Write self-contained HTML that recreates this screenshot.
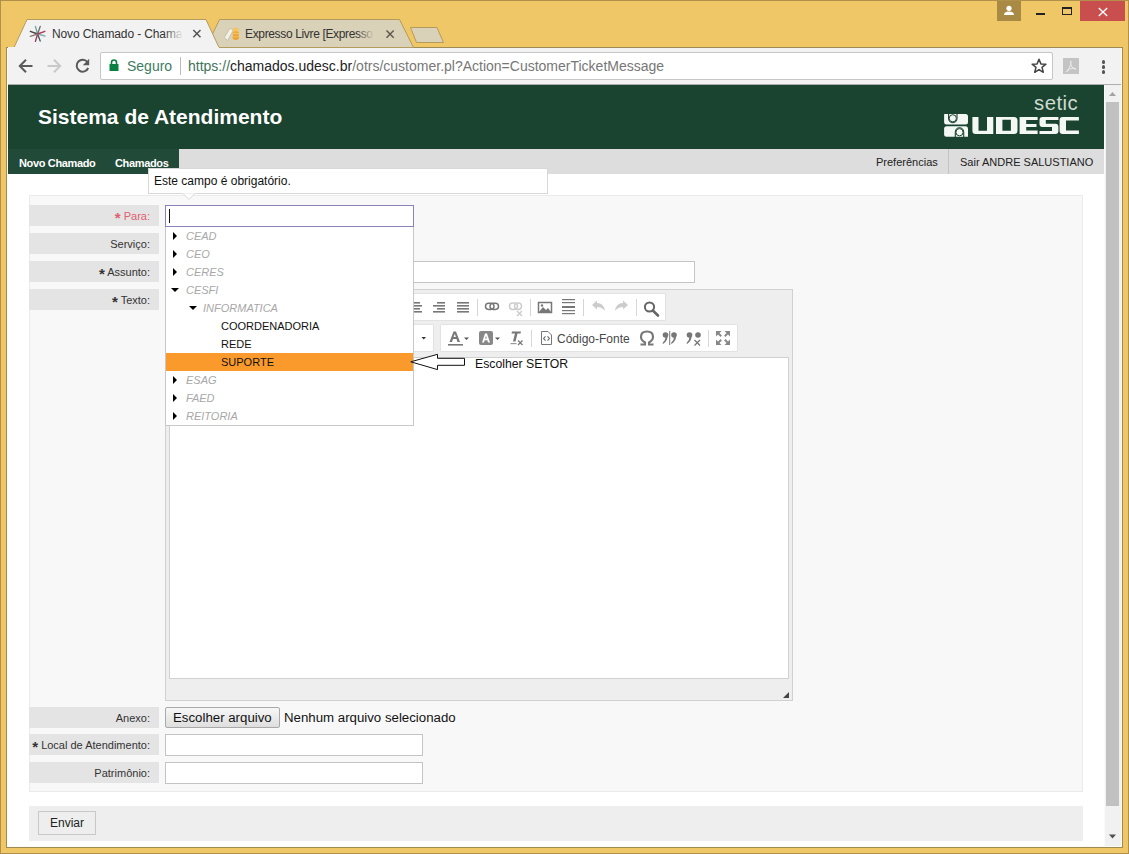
<!DOCTYPE html>
<html><head><meta charset="utf-8">
<style>
*{margin:0;padding:0;box-sizing:border-box}
html,body{width:1129px;height:854px;overflow:hidden;background:#EFC766;font-family:"Liberation Sans",sans-serif}
.a{position:absolute}
.t{white-space:nowrap;line-height:1}
.lbl{left:29px;width:130px;height:21px;background:#E4E4E4;text-align:right;padding-right:9px;font-size:11px;line-height:22px;color:#333;white-space:nowrap}
.mk{font-weight:bold;font-size:15px;position:relative;top:3px;line-height:0}
.inp{background:#fff;border:1px solid #C4C4C4}
.ddi{font-size:11px;line-height:18px;font-style:italic;color:#A8A8A8}
.ddl{font-size:11px;line-height:18px;color:#111}
.tri-r{width:0;height:0;border-top:4px solid transparent;border-bottom:4px solid transparent;border-left:4.5px solid #000}
.tri-d{width:0;height:0;border-left:4px solid transparent;border-right:4px solid transparent;border-top:4.5px solid #000}
.grp{background:#FFFFFF;border:1px solid #E2E2E2;border-radius:1px}
.sep{width:1px;height:17px;background:#D6D6D6}
</style></head><body>
<!-- frame borders -->
<div class="a" style="left:0;top:0;width:1129px;height:854px;border:1px solid #B0904A"></div>
<div class="a" style="left:6px;top:47px;width:1117px;height:801px;border:1px solid #9F8A55;background:#FFFDF2"></div>

<!-- window buttons -->
<div class="a" style="left:997px;top:1px;width:24px;height:20px;background:#A98A45"></div>
<svg class="a" style="left:997px;top:1px" width="24" height="20" viewBox="0 0 24 20"><circle cx="12" cy="7.3" r="2.6" fill="#fff"/><path d="M7 14 Q7 10.5 12 10.5 Q17 10.5 17 14 Z" fill="#fff"/></svg>
<div class="a" style="left:1036px;top:13px;width:9px;height:2px;background:#222"></div>
<div class="a" style="left:1062px;top:7px;width:10px;height:8px;border:1px solid #222;border-top-width:2px"></div>
<div class="a" style="left:1080px;top:1px;width:45px;height:20px;background:#C94F4F"></div>
<svg class="a" style="left:1080px;top:1px" width="45" height="20"><path d="M18.8 7 L27.2 15 M27.2 7 L18.8 15" stroke="#fff" stroke-width="1.3"/></svg>

<!-- tabs -->
<svg class="a" style="left:0;top:0" width="460" height="50">
  <polygon points="413.5,47.5 399.5,19.5 219.5,19.5 206,47.5" fill="#DAD1B9" stroke="#B59B5C" stroke-width="1"/>
  <polygon points="416.5,42.5 410.5,27.5 437,27.5 443.5,42.5" fill="#DAD1B9" stroke="#B59B5C" stroke-width="1"/>
  <polygon points="14,47.5 27,19.5 206,19.5 219,47.5" fill="#F2F2F2" stroke="#B59B5C" stroke-width="1"/>
  <rect x="8" y="47" width="211" height="3" fill="#F2F2F2"/>
  <!-- otrs favicon -->
  <g stroke-width="1.35" stroke-linecap="round">
   <line x1="35.4" y1="26.5" x2="37.6" y2="34" stroke="#6FA9AA"/><line x1="37.6" y1="34" x2="40.2" y2="41.1" stroke="#3D5E60"/>
   <line x1="40.2" y1="26.5" x2="37.6" y2="34" stroke="#707070"/><line x1="37.6" y1="34" x2="35.4" y2="41.4" stroke="#8D3B57"/>
   <line x1="30.3" y1="31.3" x2="37.6" y2="34" stroke="#444"/><line x1="37.6" y1="34" x2="44.9" y2="36" stroke="#86AEB5"/>
   <line x1="30.3" y1="36.3" x2="37.6" y2="34" stroke="#8C7C70"/><line x1="37.6" y1="34" x2="44.9" y2="31.3" stroke="#A4405C"/>
  </g>
  <!-- expresso favicon -->
  <polygon points="227.5,40.5 224.3,37.5 230,28.2 233.5,30" fill="#F3F0E8" stroke="#B9B2A0" stroke-width="0.7"/>
  <ellipse cx="235.6" cy="30.2" rx="3" ry="2.6" fill="#F5C563"/>
  <ellipse cx="235.8" cy="33.6" rx="3.2" ry="2.4" fill="#F0A832"/>
  <ellipse cx="235.8" cy="37.3" rx="3.2" ry="2.7" fill="#EFA22C"/>
  <path d="M233 33.5 H238.5 M233 36.8 H238.5" stroke="#F7D27A" stroke-width="0.7"/>
</svg>
<div class="a t" style="left:52px;top:28px;width:132px;height:16px;overflow:hidden;font-size:12px;letter-spacing:-0.12px;color:#333">Novo Chamado - Chama Chamados</div>
<div class="a" style="left:164px;top:24px;width:20px;height:18px;background:linear-gradient(to right,rgba(242,242,242,0),#F2F2F2 95%)"></div>
<div class="a t" style="left:245px;top:28px;width:130px;height:16px;overflow:hidden;font-size:12px;letter-spacing:-0.35px;color:#333">Expresso Livre [Expresso Livre]</div>
<div class="a" style="left:357px;top:24px;width:18px;height:18px;background:linear-gradient(to right,rgba(218,209,185,0),#DAD1B9 95%)"></div>
<svg class="a" style="left:0;top:0" width="460" height="50">
  <path d="M193.3 30 L200.5 37.2 M200.5 30 L193.3 37.2" stroke="#555" stroke-width="1.5"/>
  <path d="M386.5 30.5 L393.7 37.7 M393.7 30.5 L386.5 37.7" stroke="#5E5A50" stroke-width="1.5"/>
</svg>

<!-- toolbar -->
<div class="a" style="left:8px;top:48px;width:1113px;height:36px;background:#F2F2F2"></div>
<div class="a" style="left:8px;top:84px;width:1113px;height:1px;background:#ADADAD"></div>
<svg class="a" style="left:7px;top:47px" width="1115" height="38">
  <path d="M13.5 19 L25.5 19 M19 12.8 L12.8 19 L19 25.2" stroke="#5A5A5A" stroke-width="2" fill="none"/>
  <path d="M40.5 19 L52.5 19 M47 12.8 L53.2 19 L47 25.2" stroke="#C9C9C9" stroke-width="2" fill="none"/>
  <path d="M80.6 15.2 A6 6 0 1 0 81.2 21" stroke="#5A5A5A" stroke-width="2" fill="none"/>
  <polygon points="82.2,11.8 82.2,18.2 75.8,18.2" fill="#5A5A5A"/>
</svg>
<div class="a" style="left:100px;top:52px;width:953px;height:28px;background:#fff;border:1px solid #C6C6C6;border-radius:2px"></div>
<svg class="a" style="left:105px;top:55px" width="20" height="20">
  <rect x="4.5" y="9" width="9" height="7" fill="#0B8043"/>
  <path d="M6.5 9.5 V7.5 A2.5 2.5 0 0 1 11.5 7.5 V9.5" stroke="#0B8043" stroke-width="1.6" fill="none"/>
</svg>
<div class="a t" style="left:127px;top:59px;font-size:14px;color:#3D7C62">Seguro</div>
<div class="a" style="left:180px;top:57px;width:1px;height:18px;background:#BBB"></div>
<div class="a t" style="left:188px;top:59px;font-size:14px;color:#777"><span style="color:#3F735C">https://</span><span style="color:#222">chamados.udesc.br</span>/otrs/customer.pl?Action=CustomerTicketMessage</div>
<svg class="a" style="left:1030px;top:57px" width="18" height="18" viewBox="0 0 18 18">
  <polygon points="9,2.2 10.9,6.9 15.9,7.2 12,10.4 13.3,15.3 9,12.6 4.7,15.3 6,10.4 2.1,7.2 7.1,6.9" fill="none" stroke="#444" stroke-width="1.5" stroke-linejoin="round"/>
</svg>
<div class="a" style="left:1063px;top:58px;width:16px;height:16px;background:#C4C4C4"></div>
<svg class="a" style="left:1063px;top:58px" width="16" height="16"><path d="M8 3 C6.5 3 8 7 9 9 C10 10.5 12.5 11.5 13 11 C13.5 10 9 10 6.5 11 C4 12 3 13.5 3.5 14 C4.5 14.5 6.5 10 7.5 6.5 C8 4.5 8.5 3 8 3Z" fill="none" stroke="#EDEDED" stroke-width="1"/></svg>
<div class="a" style="left:1101.5px;top:60px;width:3.6px;height:3.6px;border-radius:2px;background:#555"></div>
<div class="a" style="left:1101.5px;top:65px;width:3.6px;height:3.6px;border-radius:2px;background:#555"></div>
<div class="a" style="left:1101.5px;top:70px;width:3.6px;height:3.6px;border-radius:2px;background:#555"></div>

<!-- page -->
<div class="a" style="left:8px;top:85px;width:1096px;height:761px;background:#fff"></div>
<div class="a" style="left:8px;top:85px;width:1096px;height:64px;background:#1A4330"></div>
<div class="a t" style="left:38px;top:105px;font:bold 21px 'Liberation Sans';color:#fff">Sistema de Atendimento</div>
<!-- logo -->
<div class="a t" style="left:1034px;top:93px;font-size:20.3px;color:#CFDCD1;letter-spacing:0.5px">setic</div>
<svg class="a" style="left:940px;top:110px" width="145" height="30" viewBox="940 110 145 30">
  <g fill="#F4F8F4">
   <path d="M944.1 114 H965.5 Q968 114 968 116.5 V122.1 Q968 124.6 965.5 124.6 H946.6 Q944.1 124.6 944.1 122.1 Z"/>
   <path d="M946.6 126.2 H965.5 Q968 126.2 968 128.7 V136.7 H946.6 Q944.1 136.7 944.1 134.2 V128.7 Q944.1 126.2 946.6 126.2 Z"/>
   <!-- U -->
   <path d="M972.4 116.9 H978.5 V130.8 H987 V116.9 H993.3 V133.9 H975.6 Q972.4 133.9 972.4 130.7 Z"/>
   <!-- D -->
   <path d="M996 116.9 H1014 Q1017.5 116.9 1017.5 120.4 V130.4 Q1017.5 133.9 1014 133.9 H996 Z M1002.4 119.8 V130.8 H1010.9 V119.8 Z" fill-rule="evenodd"/>
   <!-- E -->
   <path d="M1019.6 117 H1037.6 V120 H1026.2 V124.1 H1036.5 V126.9 H1026.2 V130.6 H1037.6 V134 H1019.6 Z"/>
   <!-- S -->
   <path d="M1042.5 117 H1058.4 V120 H1045.8 V123.8 H1055.4 Q1058.4 123.8 1058.4 126.8 V131 Q1058.4 134 1055.4 134 H1039.5 V131 H1052 V127 H1042.5 Q1039.5 127 1039.5 124 V120 Q1039.5 117 1042.5 117 Z"/>
   <!-- C -->
   <path d="M1062.6 117 H1078.9 V120.5 H1066 V130.5 H1078.9 V134 H1062.6 Q1059.6 134 1059.6 131 V120 Q1059.6 117 1062.6 117 Z"/>
  </g>
  <g fill="none" stroke="#1A4330" stroke-width="1.1">
   <path d="M948.6 113.5 V118.5 A4.2 4.2 0 0 0 957 118.5 V113.5"/>
   <path d="M955.3 137.2 V132 A4.2 4.2 0 0 1 963.7 132 V137.2"/>
  </g>
  <g fill="#F4F8F4" stroke="#1A4330" stroke-width="1"><circle cx="952.8" cy="118.3" r="3.6"/><circle cx="959.5" cy="132.2" r="3.6"/></g>
</svg>

<!-- nav -->
<div class="a" style="left:8px;top:149px;width:171px;height:25px;background:#214A38"></div>
<div class="a" style="left:179px;top:149px;width:925px;height:25px;background:#DDDDDD"></div>
<div class="a t" style="left:19px;top:156.5px;font:bold 11px 'Liberation Sans';letter-spacing:-0.35px;color:#fff">Novo Chamado</div>
<div class="a t" style="left:115px;top:156.5px;font:bold 11px 'Liberation Sans';letter-spacing:-0.35px;color:#fff">Chamados</div>
<div class="a t" style="left:876px;top:156.5px;font-size:11px;color:#222">Preferências</div>
<div class="a" style="left:948px;top:149px;width:1px;height:25px;background:#C4C4C4"></div>
<div class="a t" style="left:960px;top:156.5px;font-size:11px;color:#222">Sair ANDRE SALUSTIANO</div>

<!-- form container -->
<div class="a" style="left:29px;top:195px;width:1054px;height:597px;background:#F8F8F8;border:1px solid #EBEBEB"></div>
<div class="a lbl" style="top:205px"><span style="color:#E06070"><b class="mk">*</b> Para:</span></div>
<div class="a lbl" style="top:233px">Serviço:</div>
<div class="a lbl" style="top:261px"><b class="mk">*</b> Assunto:</div>
<div class="a lbl" style="top:289px"><b class="mk">*</b> Texto:</div>
<div class="a lbl" style="top:707px">Anexo:</div>
<div class="a lbl" style="top:734px"><b class="mk">*</b> Local de Atendimento:</div>
<div class="a lbl" style="top:762px">Patrimônio:</div>

<!-- assunto input -->
<div class="a inp" style="left:165px;top:261px;width:530px;height:22px"></div>

<!-- editor -->
<div class="a" style="left:165px;top:289px;width:628px;height:412px;background:#EEEEEE;border:1px solid #D1D1D1"></div>
<div class="a grp" style="left:170px;top:293px;width:496px;height:28px"></div>
<div class="a grp" style="left:170px;top:324px;width:264px;height:28px"></div>
<div class="a grp" style="left:440px;top:324px;width:298px;height:28px"></div>
<div class="a" style="left:169px;top:357px;width:620px;height:322px;background:#fff;border:1px solid #D1D1D1"></div>
<svg class="a" style="left:170px;top:290px" width="620" height="68" viewBox="170 290 620 68">
  <g fill="#777">
   <!-- align right -->
   <rect x="437" y="302" width="8" height="1.6"/><rect x="433" y="305" width="12" height="1.6"/><rect x="437" y="308" width="8" height="1.6"/><rect x="433" y="311" width="12" height="1.6"/>
   <!-- justify -->
   <rect x="457" y="302" width="12" height="1.6"/><rect x="457" y="305" width="12" height="1.6"/><rect x="457" y="308" width="12" height="1.6"/><rect x="457" y="311" width="12" height="1.6"/>
   <!-- align left partial -->
   <rect x="414" y="302" width="6" height="1.6"/><rect x="414" y="305" width="8" height="1.6"/><rect x="414" y="308" width="6" height="1.6"/><rect x="414" y="311" width="8" height="1.6"/>
  </g>
  <rect x="477" y="299" width="1" height="17" fill="#D6D6D6"/>
  <g fill="none" stroke="#777" stroke-width="1.5">
   <rect x="485.5" y="303.2" width="8.5" height="6.2" rx="3.1"/><rect x="490" y="303.2" width="8.5" height="6.2" rx="3.1"/>
  </g>
  <g fill="none" stroke="#CDCDCD" stroke-width="1.5">
   <rect x="509.5" y="303" width="8" height="6.5" rx="3.2"/><rect x="514.5" y="303" width="7" height="6.5" rx="3.2"/>
   <path d="M517 311 L522 316 M522 311 L517 316"/>
  </g>
  <rect x="530" y="299" width="1" height="17" fill="#D6D6D6"/>
  <!-- image -->
  <rect x="538.5" y="302.5" width="13" height="10" fill="none" stroke="#777" stroke-width="1.5"/>
  <polygon points="539,312 543,307 546,310 548,308 551,312" fill="#777"/>
  <circle cx="542" cy="305.5" r="1.2" fill="#777"/>
  <!-- hr -->
  <g fill="#777"><rect x="562" y="299" width="13" height="1.2"/><rect x="562" y="302" width="13" height="1.2"/><rect x="562" y="306" width="13" height="2"/><rect x="562" y="310" width="13" height="1.2"/><rect x="562" y="313" width="13" height="1.2"/></g>
  <rect x="583" y="299" width="1" height="17" fill="#D6D6D6"/>
  <!-- undo/redo -->
  <path d="M592 305 L597 300.5 V303 Q604 303 605 311 Q602 307 597 307 V309.5 Z" fill="#CCCCCC"/>
  <path d="M628 305 L623 300.5 V303 Q616 303 615 311 Q618 307 623 307 V309.5 Z" fill="#CCCCCC"/>
  <rect x="636" y="299" width="1" height="17" fill="#D6D6D6"/>
  <!-- search -->
  <circle cx="649.5" cy="307" r="4.6" fill="none" stroke="#666" stroke-width="2"/>
  <path d="M652.8 310.5 L658 315.5" stroke="#666" stroke-width="2.6" stroke-linecap="round"/>
  <!-- row 2: combo arrow -->
  <polygon points="421.5,337 426,337 423.75,339.5" fill="#333"/>
  <!-- text color -->
  <path d="M449.5 342 L453.5 331.5 H456 L460 342 H457.5 L456.5 339 H453 L452 342 Z M453.6 337 H455.9 L454.8 333.8 Z" fill="#777" fill-rule="evenodd"/>
  <rect x="448" y="344" width="15" height="1.6" fill="#777"/>
  <polygon points="464,337.5 469,337.5 466.5,340" fill="#555"/>
  <!-- bg color -->
  <rect x="479" y="331" width="14" height="14" rx="2" fill="#888"/>
  <path d="M482 342.5 L485 333.5 H487 L490 342.5 H488 L487.3 340.2 H484.7 L484 342.5 Z M485.2 338.5 H486.8 L486 335.8 Z" fill="#fff" fill-rule="evenodd"/>
  <polygon points="495,337.5 500,337.5 497.5,340" fill="#555"/>
  <!-- remove format Tx -->
  <path d="M512 331.5 H521 L520.5 333.5 H517.5 L515.5 341.5 H513 L515 333.5 H511.5 Z" fill="#777"/>
  <rect x="510.5" y="343" width="6" height="1.2" fill="#999"/>
  <path d="M518 340.5 L522.5 345 M522.5 340.5 L518 345" stroke="#777" stroke-width="1.2"/>
  <rect x="531" y="330" width="1" height="17" fill="#D6D6D6"/>
  <!-- source -->
  <path d="M541.5 331.5 H548 L551.5 335 V344.5 H541.5 Z" fill="none" stroke="#777" stroke-width="1"/>
  <path d="M545.5 336.3 L543.6 338.5 L545.5 340.7 M547.5 336.3 L549.4 338.5 L547.5 340.7" fill="none" stroke="#666" stroke-width="1.1"/>
  <!-- omega -->
  <path d="M640.5 344.5 H645 V342.5 Q641 340.5 641 336.8 Q641 331.5 647 331.5 Q653 331.5 653 336.8 Q653 340.5 649 342.5 V344.5 H653.5" fill="none" stroke="#777" stroke-width="2.1"/>
  <!-- blockquote icons -->
  <g fill="#777">
   <circle cx="665.5" cy="335" r="2.8"/><path d="M667.5 335.5 Q668 341 663 344 L662.5 343 Q665.5 340.5 665.5 337 Z"/>
   <circle cx="674" cy="335" r="2.8"/><path d="M676 335.5 Q676.5 341 671.5 344 L671 343 Q674 340.5 674 337 Z"/>
   <rect x="669.2" y="331" width="1" height="14"/>
   <circle cx="689.5" cy="335" r="2.8"/><path d="M691.5 335.5 Q692 341 687 344 L686.5 343 Q689.5 340.5 689.5 337 Z"/>
   <circle cx="698" cy="335" r="2.8"/>
  </g>
  <path d="M694.5 340 L700 345.5 M700 340 L694.5 345.5" stroke="#777" stroke-width="1.3"/>
  <rect x="708" y="330" width="1" height="17" fill="#D6D6D6"/>
  <!-- maximize -->
  <g fill="#888">
   <polygon points="716,331 721.5,331 716,336.5"/><polygon points="730,331 724.5,331 730,336.5"/>
   <polygon points="716,345 721.5,345 716,339.5"/><polygon points="730,345 724.5,345 730,339.5"/>
  </g>
  <g stroke="#888" stroke-width="2">
   <path d="M717.5 332.5 L721.2 336.2 M728.5 332.5 L724.8 336.2 M717.5 343.5 L721.2 339.8 M728.5 343.5 L724.8 339.8"/>
  </g>
</svg>
<div class="a t" style="left:557px;top:333px;font-size:12px;color:#484848">Código-Fonte</div>
<svg class="a" style="left:780px;top:690px" width="12" height="10"><polygon points="9,2 9,8 3,8" fill="#444"/></svg>

<!-- file -->
<div class="a" style="left:165px;top:707px;width:115px;height:21px;background:linear-gradient(#F7F7F7,#DEDEDE);border:1px solid #A9A9A9;border-radius:2px"></div>
<div class="a t" style="left:173px;top:711px;font-size:13.25px;color:#111">Escolher arquivo</div>
<div class="a t" style="left:284px;top:711px;font-size:13.25px;color:#111">Nenhum arquivo selecionado</div>
<div class="a inp" style="left:165px;top:734px;width:258px;height:22px"></div>
<div class="a inp" style="left:165px;top:762px;width:258px;height:22px"></div>

<!-- bottom bar -->
<div class="a" style="left:29px;top:806px;width:1054px;height:35px;background:#EEEEEE"></div>
<div class="a" style="left:38px;top:811px;width:58px;height:24px;background:#EEEEEE;border:1px solid #C8C8C8"></div>
<div class="a t" style="left:50px;top:817px;font-size:12px;color:#222">Enviar</div>

<!-- tooltip -->
<div class="a" style="left:148px;top:168px;width:400px;height:26px;background:#fff;border:1px solid #D8D8D8"></div>
<svg class="a" style="left:180px;top:192px" width="18" height="9"><polygon points="2.5,1 9,7.5 15.5,1" fill="#fff" stroke="#D8D8D8" stroke-width="1"/><rect x="2" y="0" width="14" height="1.2" fill="#fff"/></svg>
<div class="a t" style="left:154px;top:175px;font-size:12px;color:#111">Este campo é obrigatório.</div>

<!-- para input -->
<div class="a" style="left:165px;top:205px;width:249px;height:22px;background:#fff;border:1px solid #8A82B8"></div>
<div class="a" style="left:169px;top:209px;width:1px;height:14px;background:#111"></div>
<!-- dropdown -->
<div class="a" style="left:165px;top:227px;width:249px;height:199px;background:#fff;border:1px solid #C8C8C8;border-top:0"></div>
<div class="a" style="left:166px;top:353px;width:247px;height:18px;background:#FA9A2C"></div>
<div class="a tri-r" style="left:173px;top:232px"></div>
<div class="a t ddi" style="left:186px;top:227px">CEAD</div>
<div class="a tri-r" style="left:173px;top:250px"></div>
<div class="a t ddi" style="left:186px;top:245px">CEO</div>
<div class="a tri-r" style="left:173px;top:268px"></div>
<div class="a t ddi" style="left:186px;top:263px">CERES</div>
<div class="a tri-d" style="left:171px;top:288px"></div>
<div class="a t ddi" style="left:186px;top:281px">CESFI</div>
<div class="a tri-d" style="left:189px;top:306px"></div>
<div class="a t ddi" style="left:203px;top:299px">INFORMATICA</div>
<div class="a t ddl" style="left:221px;top:317px">COORDENADORIA</div>
<div class="a t ddl" style="left:221px;top:335px">REDE</div>
<div class="a t ddl" style="left:221px;top:353px">SUPORTE</div>
<div class="a tri-r" style="left:173px;top:376px"></div>
<div class="a t ddi" style="left:186px;top:371px">ESAG</div>
<div class="a tri-r" style="left:173px;top:394px"></div>
<div class="a t ddi" style="left:186px;top:389px">FAED</div>
<div class="a tri-r" style="left:173px;top:412px"></div>
<div class="a t ddi" style="left:186px;top:407px">REITORIA</div>

<!-- annotation arrow + text -->
<svg class="a" style="left:405px;top:350px" width="70" height="24" viewBox="405 350 70 24">
  <polygon points="410.8,361.8 437.5,354.3 437.5,358.3 464.5,358.3 464.5,365.3 437.5,365.3 437.5,369.6" fill="#fff" stroke="#111" stroke-width="1"/>
</svg>
<div class="a t" style="left:474.5px;top:356.5px;font-size:13.3px;color:#111;transform:scaleX(0.922);transform-origin:0 0">Escolher SETOR</div>

<!-- scrollbar -->
<div class="a" style="left:1104px;top:85px;width:17px;height:761px;background:#F1F1F1;border-left:1px solid #FAFAFA"></div>
<svg class="a" style="left:1104px;top:85px" width="17" height="761"><polygon points="5,11 12,11 8.5,7" fill="#A3A3A3"/><polygon points="5,749.5 12,749.5 8.5,753.5" fill="#505050"/></svg>
<div class="a" style="left:1106px;top:102px;width:13px;height:704px;background:#C1C1C1"></div>
</body></html>
